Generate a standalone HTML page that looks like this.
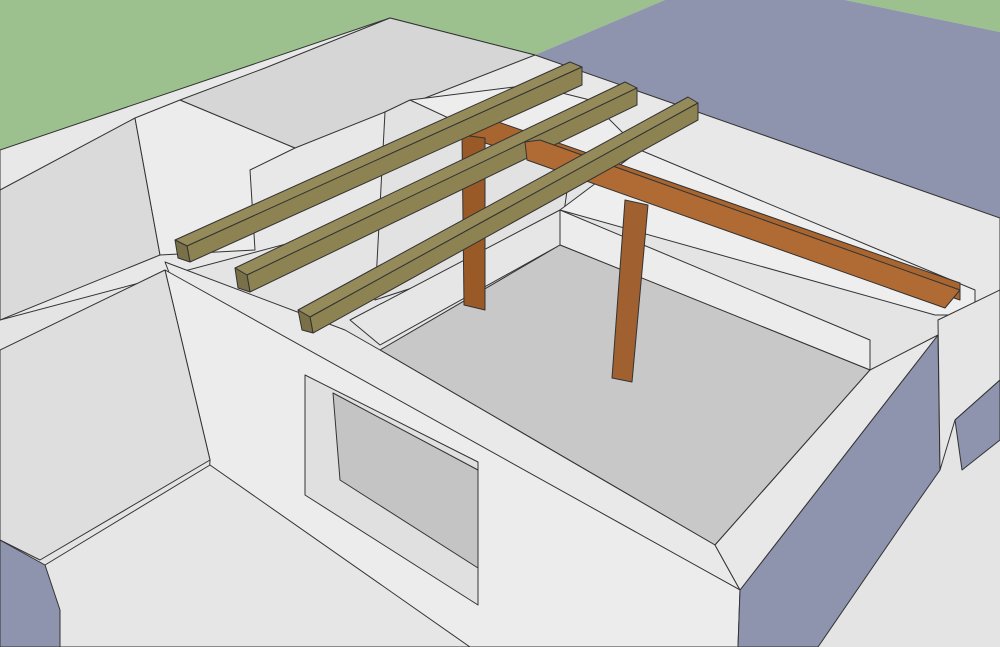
<!DOCTYPE html>
<html><head><meta charset="utf-8"><style>html,body{margin:0;padding:0;width:1000px;height:647px;overflow:hidden;background:#e4e4e4}</style></head>
<body>
<svg width="1000" height="647" viewBox="0 0 1000 647" xmlns="http://www.w3.org/2000/svg" stroke="#333" stroke-width="1" stroke-linejoin="round">
<rect x="0" y="0" width="1000" height="647" fill="#e4e4e4" stroke="none"/>
<polygon points="0,0 665,0 535,55 390,18 0,150" fill="#9dc08f" stroke="none"/>
<polygon points="535,55 665,0 845,0 1000,32 1000,218" fill="#8e93ae" stroke="none"/>
<polygon points="845,0 1000,0 1000,32" fill="#9dc08f" stroke="none"/>
<polygon points="0,150 390,18 535,55 1000,218 1000,290 975,315 640,150 0,320" fill="#e8e8e8"/>
<polygon points="0,190 135,118 160,255 0,320" fill="#dadada"/>
<polygon points="135,118 180,100 295,148 250,170 255,250 160,255" fill="#ececec"/>
<polygon points="180,100 265,68 390,18 535,55 420,100 385,112 295,148" fill="#d6d6d6"/>
<polygon points="385,112 410,100 570,170 560,240 375,300" fill="#e2e2e2"/>
<polygon points="410,100 560,170 640,150 590,100 530,85" fill="#ededed"/>
<polygon points="560,210 870,340 870,370 560,245" fill="#ececec"/>
<polygon points="350,320 560,210 560,245 380,345" fill="#e6e6e6"/>
<polygon points="640,150 975,290 975,315 935,315 560,210" fill="#eeeeee"/>
<polygon points="380,350 560,245 870,370 715,545" fill="#c8c8c8"/>
<polygon points="345,330 380,350 715,545 740,590 170,275 165,262 345,330" fill="#e9e9e9"/>
<polygon points="165,270 740,590 738,647 200,647 210,460" fill="#ececec"/>
<polygon points="0,350 165,270 210,460 40,560 0,540" fill="#dedede"/>
<polygon points="305,375 478,462 478,605 305,495" fill="#e0e0e0"/>
<polygon points="333,393 478,470 478,568 340,480" fill="#c4c4c4"/>
<polygon points="45,565 210,465 470,647 60,647" fill="#e6e6e6"/>
<polygon points="0,540 45,565 60,610 60,647 0,647" fill="#8e93ae"/>
<polygon points="740,590 938,335 940,470 905,520 818,647 738,647" fill="#8e93ae"/>
<polygon points="715,545 870,370 938,335 740,590" fill="#e8e8e8"/>
<polygon points="938,320 1000,290 1000,380 955,420 940,470" fill="#e6e6e6"/>
<polygon points="955,420 1000,380 1000,440 962,470" fill="#8e93ae"/>
<!-- brown frame (behind olive beams) -->
<polygon points="470,120 484,117 960,283 960,300 470,138" fill="#a8652f"/>
<polygon points="462,135 485,138 485,310 464,305" fill="#9a5a28"/>
<!-- olive beams -->
<g fill="#8c8252">
<polygon points="175,240 570,62 582,67 187,246" fill="#958a5a"/>
<polygon points="187,246 582,67 582,85 190,262"/>
<polygon points="175,240 187,246 190,262 178,258" fill="#7a7048"/>
<polygon points="235,268 625,82 637,88 247,275" fill="#958a5a"/>
<polygon points="247,275 637,88 637,105 250,292"/>
<polygon points="235,268 247,275 250,292 238,288" fill="#7a7048"/>
</g>
<polygon points="525,142 540,140 960,290 945,308 527,160" fill="#b06a33"/>
<polygon points="625,200 648,205 632,382 612,378" fill="#a06030"/>
<g fill="#8c8252">
<polygon points="298,310 688,97 698,103 310,317" fill="#958a5a"/>
<polygon points="310,317 698,103 698,120 313,333"/>
<polygon points="298,310 310,317 313,333 302,330" fill="#7a7048"/>
</g>
</svg>
</body></html>
